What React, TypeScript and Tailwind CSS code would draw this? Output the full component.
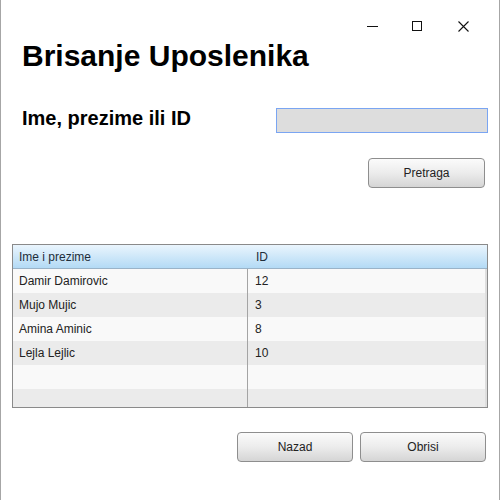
const rows = [
  { name: 'Damir Damirovic', id: '12' },
  { name: 'Mujo Mujic', id: '3' },
  { name: 'Amina Aminic', id: '8' },
  { name: 'Lejla Lejlic', id: '10' },
  { name: '', id: '' },
  { name: '', id: '' },
]

function SwingButton({ label, width }: { label: string; width: string }) {
  return (
    <button
      className={`${width} h-[30px] rounded-[4px] border border-[#8e8e8e] bg-gradient-to-b from-[#fbfbfb] via-[#ececec] to-[#d5d5d5] text-[12px] text-[#222]`}
    >
      {label}
    </button>
  )
}

export default function App() {
  return (
    <div className="flex h-[500px] w-[500px] flex-col border-x border-[#a6a6a6] bg-white font-['Liberation_Sans',Arial,sans-serif] text-[#222]">
      {/* title bar */}
      <div className="flex h-[41px] items-start pt-[21px]">
        <div className="ml-[366px] mt-[5px] h-px w-[11px] bg-[#111]" />
        <div className="ml-[34px] h-[10px] w-[10px] border border-[#111]" />
        <svg className="ml-[36px]" width="11" height="11" viewBox="0 0 11 11" fill="none" stroke="#111" strokeWidth="1.1">
          <path d="M0.5 0.5 L10.5 10.5 M10.5 0.5 L0.5 10.5" />
        </svg>
      </div>

      <h1 className="pl-[21px] text-[30px] font-bold leading-[30px] text-black">Brisanje Uposlenika</h1>

      <div className="mt-[37px] flex items-start pl-[21px] pr-[11px]">
        <span className="text-[20px] font-bold leading-[20px] text-black">Ime, prezime ili ID</span>
        <input className="ml-auto h-[25px] w-[212px] border border-[#7aa5f2] bg-[#dddddd] outline-none" />
      </div>

      <div className="mt-[25px] flex justify-end pr-[14px]">
        <SwingButton label="Pretraga" width="w-[117px]" />
      </div>

      <div className="ml-[11px] mt-[56px] flex h-[164px] w-[476px] flex-col border border-[#8a8a8a] bg-[#dcdcdc]">
        <div className="flex h-[24px] shrink-0 items-center border-b border-[#9ab3c8] bg-gradient-to-b from-[#eaf5fd] to-[#b3daf5] text-[12px] text-[#1f2d3a]">
          <div className="w-[235px] pl-[6px]">Ime i prezime</div>
          <div className="pl-[8px]">ID</div>
        </div>
        <div className="flex-1 overflow-hidden border-r-2 border-[#dedede]">
          {rows.map((r, i) => (
            <div
              key={i}
              className={`flex h-[24px] items-center text-[12px] ${i % 2 === 0 ? 'bg-[#f9f9f9]' : 'bg-[#ebebeb]'}`}
            >
              <div className="flex h-full w-[235px] items-center border-r border-[#a4a4a4] pl-[6px]">{r.name}</div>
              <div className="pl-[7px]">{r.id}</div>
            </div>
          ))}
        </div>
      </div>

      <div className="mt-[24px] flex justify-end gap-[7px] pr-[13px]">
        <SwingButton label="Nazad" width="w-[116px]" />
        <SwingButton label="Obrisi" width="w-[126px]" />
      </div>
    </div>
  )
}
